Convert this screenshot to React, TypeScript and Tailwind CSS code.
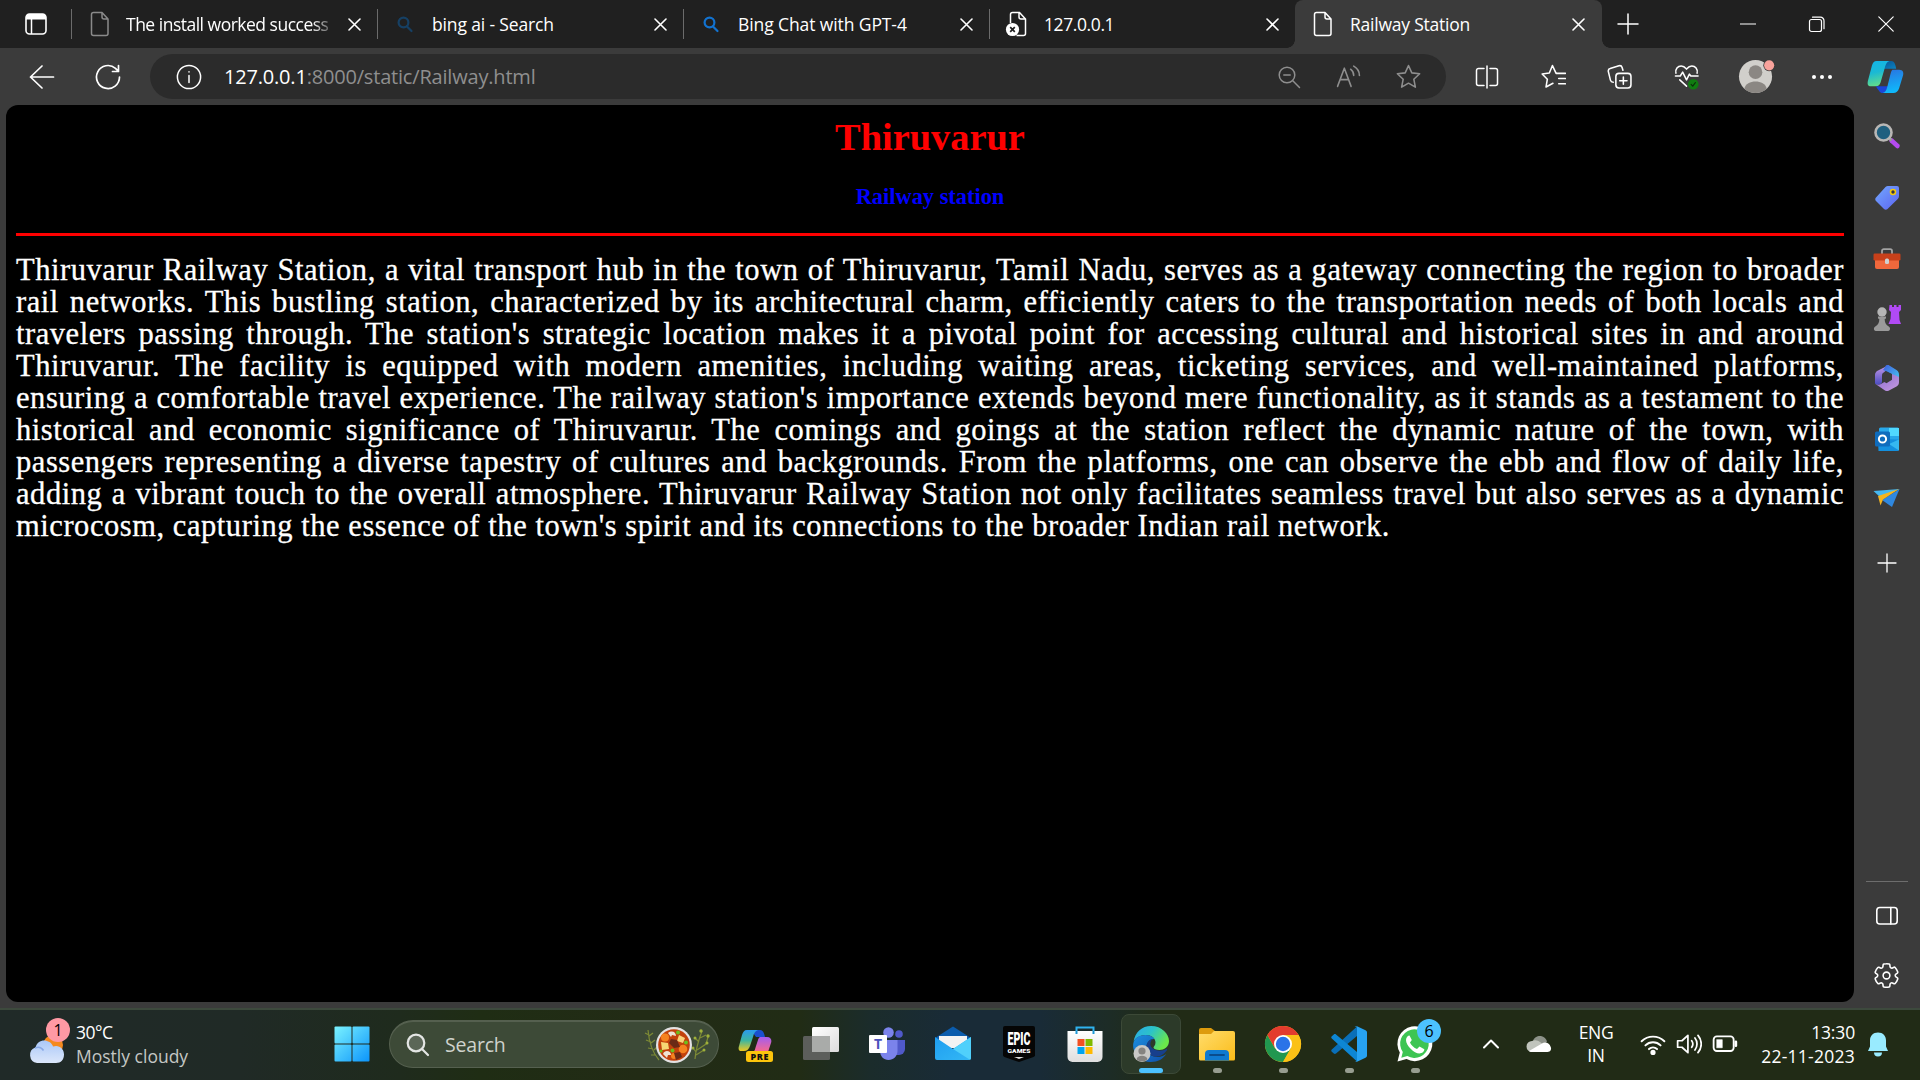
import React from 'react';

type Kids = { children?: React.ReactNode };
type IconProps = Kids & { s?: number; w?: number; h?: number; vb?: string; sw?: number; cls?: string };

// Outline icon: strokes follow the current text colour.
function Line({ children, s = 24, sw = 1.5, vb = '0 0 24 24', cls = '' }: IconProps) {
  return (
    <svg width={s} height={s} viewBox={vb} fill="none" stroke="currentColor" strokeWidth={sw} strokeLinecap="round" strokeLinejoin="round" className={'shrink-0 ' + cls}>
      {children}
    </svg>
  );
}

// Multi-colour icon.
function Art({ children, w = 36, h = 36, vb = '0 0 36 36', cls = '' }: IconProps) {
  return (
    <svg width={w} height={h} viewBox={vb} className={'shrink-0 overflow-visible ' + cls}>
      {children}
    </svg>
  );
}

function Grad({ id, from, to, x2 = 1, y2 = 1, mid }: { id: string; from: string; to: string; x2?: number; y2?: number; mid?: string }) {
  return (
    <linearGradient id={id} x1="0" y1="0" x2={x2} y2={y2}>
      <stop offset="0" stopColor={from} />
      {mid ? <stop offset="0.5" stopColor={mid} /> : null}
      <stop offset="1" stopColor={to} />
    </linearGradient>
  );
}

function CloseIcon() {
  return (
    <Line s={13} vb="0 0 13 13" sw={1.6} cls="text-white">
      <path d="M1 1l11 11M12 1L1 12" />
    </Line>
  );
}

function PageIcon() {
  return (
    <Line s={26} vb="0 0 26 26" sw={1.5}>
      <path d="M6.5 1.5h8.5l6 6.5v14.500a2 2 0 0 1-2 2H6.500a2 2 0 0 1-2-2v-19a2 2 0 0 1 2-2zM15 1.500v4.500a2 2 0 0 0 2 2h4" />
    </Line>
  );
}

function BingGlass() {
  return (
    <Line s={18} vb="0 0 18 18" sw={2.2} cls="mr-0.5">
      <circle cx="7.500" cy="7.500" r="4.900" />
      <path d="M11 11.500l4.500 4.500" />
    </Line>
  );
}

function FailedPage() {
  return (
    <svg width="26" height="26" viewBox="0 0 26 26" className="mr-1.5 shrink-0">
      <path d="M8.500 12V3.500a2 2 0 0 1 2-2h7l6 6.500v14.500a2 2 0 0 1-2 2h-7M17 1.500v4.500a2 2 0 0 0 2 2h4" fill="none" stroke="#fff" strokeWidth="1.500" />
      <circle cx="10.500" cy="18.500" r="6.600" fill="#fff" />
      <path d="M8.200 16.200l4.600 4.600m0-4.600l-4.600 4.600" stroke="#202020" strokeWidth="1.700" />
    </svg>
  );
}

function Tab({ icon, title, track }: { icon: React.ReactNode; title: string; track: string }) {
  return (
    <div className="flex h-12 w-[306px] items-center">
      <span className="h-[30px] w-px bg-[#6b6b6b]" />
      <span className="ml-3.5 flex w-7 justify-center">{icon}</span>
      <span className={'ml-3 w-[214px] whitespace-nowrap text-[17.500px] leading-6 ' + track}>{title}</span>
      <span className="ml-2 flex">
        <CloseIcon />
      </span>
    </div>
  );
}

function TabStrip() {
  return (
    <div className="flex h-12 items-center bg-[#202020] text-white">
      <div className="flex w-[71px] justify-center">
        <svg width="24" height="24" viewBox="0 0 24 24">
          <rect x="2" y="2" width="20" height="20" rx="3.500" fill="none" stroke="#fff" strokeWidth="1.600" />
          <path d="M2 7.500V5.500A3.500 3.500 0 0 1 5.500 2h13A3.500 3.500 0 0 1 22 5.500v2z" fill="#fff" />
          <path d="M7.500 7v15" stroke="#fff" strokeWidth="1.500" />
        </svg>
      </div>
      <Tab
        icon={<span className="text-[#8a8a8a]"><PageIcon /></span>}
        title="The install worked success"
        track="tracking-[-0.500px] [mask-image:linear-gradient(to_right,black_186px,transparent_210px)]"
      />
      <Tab icon={<span className="text-[#164064]"><BingGlass /></span>} title="bing ai - Search" track="tracking-[-0.150px]" />
      <Tab icon={<span className="text-[#1272cf]"><BingGlass /></span>} title="Bing Chat with GPT-4" track="tracking-[-0.100px]" />
      <Tab icon={<FailedPage />} title="127.0.0.1" track="tracking-[-0.400px]" />
      <div className="relative flex h-12 w-[307px] items-center rounded-t-lg bg-[#3b3b3b]">
        <span className="absolute -left-2 bottom-0 h-2 w-2 bg-[radial-gradient(circle_at_0_0,#202020_7.500px,#3b3b3b_8px)]" />
        <span className="absolute -right-2 bottom-0 h-2 w-2 bg-[radial-gradient(circle_at_100%_0,#202020_7.500px,#3b3b3b_8px)]" />
        <span className="ml-[14px] flex w-7 justify-center"><PageIcon /></span>
        <span className="ml-[13px] w-[208px] whitespace-nowrap text-[17.500px] leading-6 tracking-[-0.220px]">Railway Station</span>
        <span className="ml-[14px] flex"><CloseIcon /></span>
      </div>
      <span className="ml-[15px] flex">
        <Line s={22} vb="0 0 22 22" sw={1.5}><path d="M11 1v20M1 11h20" /></Line>
      </span>
      <div className="ml-auto flex items-center">
        <span className="flex w-[69px] justify-center">
          <Line s={16} vb="0 0 16 16" sw={1.200}><path d="M0.500 8h15" /></Line>
        </span>
        <span className="flex w-[69px] justify-center">
          <Line s={17} vb="0 0 17 17" sw={1.200}>
            <rect x="1.500" y="3.500" width="12" height="12" rx="2" />
            <path d="M4.500 1.200h8a3.500 3.500 0 0 1 3.500 3.500v8" />
          </Line>
        </span>
        <span className="flex w-[69px] justify-center">
          <Line s={16} vb="0 0 16 16" sw={1.200}><path d="M0.800 0.800l14.400 14.400M15.200 0.800L0.800 15.200" /></Line>
        </span>
      </div>
    </div>
  );
}

function CopilotSwirl() {
  return (
    <Art w={37} h={35} vb="0 0 38 36">
      <defs>
        <Grad id="cpA" from="#12b4e8" mid="#1bb9d4" to="#5ddb8e" x2={0.2} />
        <Grad id="cpB" from="#2a72e0" to="#0fb8fb" x2={0.2} />
        <Grad id="cpC" from="#0a4f8e" to="#0a84c4" />
      </defs>
      <path d="M14 2h11c3 0 4 3 5 8H17z" fill="url(#cpC)" />
      <path d="M10 2h13c-3 1-4 4-5 8l-4 14c-1 3-2 4-5 4H4c-3 0-4-2-3-6L5 7c1-3 2-5 5-5z" fill="url(#cpA)" />
      <path d="M9 28h13l-4 7h-2c-3 0-4-3-7-7z" fill="#1b46d8" />
      <path d="M26 11h7c4 0 5 3 4 6l-4 13c-1 3-3 5-6 5H16c3-1 4-3 5-7l3-12c.5-2 1-4 2-5z" fill="url(#cpB)" />
    </Art>
  );
}

function Toolbar() {
  return (
    <div className="flex h-[57px] items-center bg-[#3b3b3b] text-white">
      <span className="ml-[29px] flex">
        <Line s={26} vb="0 0 26 26" sw={1.700}><path d="M13 2L1.500 13 13 24M1.500 13h23" /></Line>
      </span>
      <span className="ml-10 flex">
        <Line s={26} vb="0 0 26 26" sw={1.700}><path d="M24.500 13a11.500 11.500 0 1 1-4-8.700l2.500 2.500M23.500 1.500v6h-6" /></Line>
      </span>
      <div className="ml-[29px] flex h-[45px] w-[1296px] items-center rounded-full bg-[#2b2b2b]">
        <span className="ml-[26px] flex">
          <Line s={26} vb="0 0 26 26" sw={1.500}><circle cx="13" cy="13" r="11.600" /><path d="M13 11.500v7M13 7.800v.3" /></Line>
        </span>
        <span className="ml-[22px] whitespace-nowrap text-[20px] tracking-[-0.190px] text-[#8f8f8f]">
          <span className="text-white">127.0.0.1</span>:8000/static/Railway.html
        </span>
        <div className="ml-auto mr-[25px] flex items-center gap-[35px] text-[#8e8e8e]">
          <Line><circle cx="10" cy="10" r="7.800" /><path d="M15.800 15.800l6.700 6.700M6.800 10h6.400" /></Line>
          <Line s={25}>
            <path d="M1.500 21.500L8 4l6.500 17.500M4 15h8M14 5c2 1.500 3 3.500 3 6M17 2c3.500 2 5.500 5 5.500 9" />
          </Line>
          <Line s={25}><path d="M12 1.500l3.200 7 7.500.900-5.600 5.200 1.500 7.600-6.600-3.800-6.600 3.800 1.500-7.600L1.300 9.400l7.500-.9z" /></Line>
        </div>
      </div>
      <div className="ml-[29px] flex items-center gap-[41.500px]">
        <Line><path d="M12 1v22M9 3.500H3.500a2 2 0 0 0-2 2v13a2 2 0 0 0 2 2H9M15 3.500h5.500a2 2 0 0 1 2 2v13a2 2 0 0 1-2 2H15" /></Line>
        <Line s={25}><path d="M15 9h8.500M17 14h6.500M17 19h6.500M14.500 9L11 1.500 8 8.700l-6.900.900 5 5-1.300 7.500 6.700-3.600" /></Line>
        <Line s={25}>
          <rect x="8.500" y="9" width="14.500" height="14" rx="3" />
          <path d="M15.700 12.500v7M12.200 16h7M6 17.500c-1.500 0-2.300-.5-2.700-2L1.300 7.300C1 5.700 1.500 4.800 3 4.400l8.500-2.700c1.500-.4 2.500.1 3 1.600L15.300 6" />
        </Line>
        <svg width="26" height="27" viewBox="0 0 27 27" fill="none" className="shrink-0">
          <path d="M2 10C1 5.500 4 2.500 7.500 2.500c2.500 0 4 1.500 5.500 3.300 1.500-1.800 3-3.300 5.500-3.300C22 2.500 25 5.500 24 10M1.500 13h5l2.500-4 4 8 3-6 1.500 2H25M6 17l7 6.500" stroke="#fff" strokeWidth="1.600" strokeLinecap="round" strokeLinejoin="round" />
          <circle cx="20" cy="21.500" r="5.500" fill="#107c10" />
          <path d="M17.500 21.500l2 2 3-4" stroke="#0b2b0b" strokeWidth="1.200" />
        </svg>
      </div>
      <Art w={37} h={38} vb="0 0 38 38" cls="ml-[38px]">
        <circle cx="18" cy="18.500" r="17" fill="#d1cfcb" />
        <circle cx="18" cy="14" r="7" fill="#8b8783" />
        <path d="M6.500 31c2-10 21-10 23 0A17 17 0 0 1 6.500 31z" fill="#8b8783" />
        <circle cx="32" cy="7" r="6" fill="#3b3b3b" />
        <circle cx="32" cy="7" r="5.200" fill="#f8a29b" />
      </Art>
      <span className="ml-[37px] flex w-5 justify-between">
        <i className="h-1 w-1 rounded-full bg-white" />
        <i className="h-1 w-1 rounded-full bg-white" />
        <i className="h-1 w-1 rounded-full bg-white" />
      </span>
      <span className="ml-[35px] flex"><CopilotSwirl /></span>
    </div>
  );
}

const lines = [
  'Thiruvarur Railway Station, a vital transport hub in the town of Thiruvarur, Tamil Nadu, serves as a gateway connecting the region to broader',
  'rail networks. This bustling station, characterized by its architectural charm, efficiently caters to the transportation needs of both locals and',
  "travelers passing through. The station's strategic location makes it a pivotal point for accessing cultural and historical sites in and around",
  'Thiruvarur. The facility is equipped with modern amenities, including waiting areas, ticketing services, and well-maintained platforms,',
  "ensuring a comfortable travel experience. The railway station's importance extends beyond mere functionality, as it stands as a testament to the",
  'historical and economic significance of Thiruvarur. The comings and goings at the station reflect the dynamic nature of the town, with',
  'passengers representing a diverse tapestry of cultures and backgrounds. From the platforms, one can observe the ebb and flow of daily life,',
  'adding a vibrant touch to the overall atmosphere. Thiruvarur Railway Station not only facilitates seamless travel but also serves as a dynamic',
];

function Page() {
  return (
    <main className="ml-1.5 h-[897px] w-[1848px] rounded-xl bg-black pl-[10px] pr-[10px] pt-2.5 font-['Liberation_Serif',serif]">
      <h1 className="text-center text-[38.400px] font-bold leading-[44px] text-[#ff0000]">Thiruvarur</h1>
      <h3 className="mt-[25px] text-center text-[22.400px] font-bold leading-[26px] text-[#0000ff]">Railway station</h3>
      <hr className="mt-[23px] h-[3px] border-0 bg-[#ff0000]" />
      <div className="mt-[18px] text-[30.500px] leading-8 tracking-[0.550px] text-white [-webkit-text-stroke:0.300px_white]">
        {lines.map((line) => (
          <p key={line} className="whitespace-nowrap [text-align-last:justify]">{line}</p>
        ))}
        <p className="w-[1374px] whitespace-nowrap [text-align-last:justify]">
          microcosm, capturing the essence of the town's spirit and its connections to the broader Indian rail network.
        </p>
      </div>
    </main>
  );
}

function SideCell({ children, cls }: Kids & { cls: string }) {
  return <div className={'flex w-full items-center justify-center ' + cls}>{children}</div>;
}

function Sidebar() {
  return (
    <aside className="flex h-[903px] w-[65px] flex-col items-center text-white">
      <SideCell cls="h-[62px]">
        <Art w={26} h={26} vb="0 0 26 26">
          <path d="M17.500 17.500l6 5.500" stroke="#b44bf0" strokeWidth="4.500" strokeLinecap="round" />
          <path d="M14 14l3.500 3.500" stroke="#999" strokeWidth="3" />
          <circle cx="9.500" cy="9.500" r="8" fill="#20607f" stroke="#b9b7b5" strokeWidth="2.600" />
        </Art>
      </SideCell>
      <SideCell cls="h-[62px]">
        <Art w={26} h={26} vb="0 0 26 26">
          <defs><Grad id="tag" from="#72a8ff" to="#5c63f0" /></defs>
          <path d="M14 1h9a2 2 0 0 1 2 2v8c0 1-.3 2-1 2.700L13.500 24c-1 1-2.500 1-3.500 0L2 16c-1-1-1-2.500 0-3.500L11.500 2C12.200 1.300 13 1 14 1z" fill="url(#tag)" />
          <circle cx="19" cy="7" r="2.500" fill="#334" stroke="#f2c811" strokeWidth="1.600" />
        </Art>
      </SideCell>
      <SideCell cls="h-[60px]">
        <Art w={28} h={22} vb="0 0 28 22">
          <path d="M9 6V3a1.800 1.800 0 0 1 1.800-1.800h6.400A1.800 1.800 0 0 1 19 3v3" fill="none" stroke="#a3a3a3" strokeWidth="1.800" />
          <rect x="2" y="8" width="24" height="13" rx="2" fill="#f0683c" />
          <rect x="0.500" y="5.500" width="27" height="7" rx="1.200" fill="#c8401a" />
          <rect x="12" y="10.500" width="4" height="5.500" rx="1.500" fill="#d0d0d0" />
        </Art>
      </SideCell>
      <SideCell cls="h-[58px]">
        <Art w={28} h={28} vb="0 0 28 28">
          <path d="M16.500 1h2.500v2h2V1h2.500v2h2V1H28v5l-2 2 .5 8 1.500 4H15.500l2-5 .5-7-2-2z" fill="#b14af5" />
          <circle cx="9" cy="8" r="4.700" fill="#b5b5b5" />
          <path d="M5 12.500h8v2l-1.300.5c0 3 .8 5.500 4 7.500 1.800 1 2 4-.5 4.500H2.800c-2.500-.5-2.300-3.500-.5-4.500 3.200-2 4-4.500 4-7.500L5 14.500z" fill="#9a9a9a" />
        </Art>
      </SideCell>
      <SideCell cls="h-[62px]">
        <Art w={26} h={28} vb="0 0 26 28">
          <defs>
            <Grad id="mA" from="#c99be8" to="#4a4cc0" x2={0} />
            <Grad id="mB" from="#3f5fe0" to="#47c9f0" />
            <Grad id="mC" from="#8a6ad0" to="#c79be0" />
          </defs>
          <path d="M15 1L4 6.500C2 7.500 1 9 1 11v8c0 1.500 2 2 4 1.500 2-.5 3-1.500 3-3V12c0-2 1-3 2.500-4z" fill="url(#mA)" />
          <path d="M12 1.500c1-.6 2.300-.5 3.300 0l7.200 4.500c2 1.200 2.500 3 2.500 5v6l-7-4V10L9 6z" fill="url(#mB)" />
          <path d="M25 13v5c0 2-.5 3.200-2.500 4.500L15 26.500c-1.300.7-2.700.7-4 0L1.500 20c2 1 4 .8 5.500 0l11-6.500V10z" fill="url(#mC)" />
          <path d="M8.500 9.500l4-2.300 5.500 3v5.500l-5.500 3.500-4-2.300z" fill="#3b3b3b" />
        </Art>
      </SideCell>
      <SideCell cls="h-[59px]">
        <Art w={24} h={24} vb="0 0 24 24">
          <rect x="4" y="0.500" width="20" height="17" rx="1.500" fill="#28a8ea" />
          <path d="M14 1h10v8H14z" fill="#50d9ff" />
          <path d="M3 12l21 .5V22.500a1.500 1.500 0 0 1-1.500 1.500H3.500z" fill="#1490df" />
          <path d="M24 12.500v11L14 17z" fill="#35b8f1" />
          <rect x="0" y="4.500" width="15" height="15" rx="1.500" fill="#0f6cbd" />
          <circle cx="7.500" cy="12" r="3.600" fill="none" stroke="#fff" strokeWidth="2" />
        </Art>
      </SideCell>
      <SideCell cls="h-[60px]">
        <Art w={27} h={20} vb="0 0 27 20">
          <path d="M0.500 3L26.500 1 8 10z" fill="#46b8f0" />
          <path d="M26.500 1L19 19 9 12z" fill="#2f88e0" />
          <path d="M26 1L5 8l2.500 9.500L10 11.500z" fill="#f5b51e" />
        </Art>
      </SideCell>
      <SideCell cls="h-[69px]">
        <Line s={20} vb="0 0 20 20" sw={1.300}><path d="M10 1v18M1 10h18" /></Line>
      </SideCell>
      <div className="mt-auto h-px w-[42px] bg-[#6d6d6d]" />
      <SideCell cls="h-[67px]">
        <Line s={24} sw={1.600}><rect x="1.800" y="3.500" width="20.400" height="16.500" rx="3" /><path d="M15.800 3.500V20" /></Line>
      </SideCell>
      <SideCell cls="mb-[6px] h-[53px]">
        <Line s={29} vb="0 0 24 24" sw={1.300}>
          <path d="M12.010 2.250c.740.008 1.470.090 2.180.250.310.070.550.330.580.650l.170 1.530a1.380 1.380 0 0 0 1.920 1.110l1.400-.610c.290-.130.630-.060.850.170a9.800 9.800 0 0 1 2.200 3.800c.090.300-.020.630-.270.810l-1.250.920a1.380 1.380 0 0 0 0 2.220l1.250.920c.250.190.360.520.270.820a9.800 9.800 0 0 1-2.200 3.800.750.750 0 0 1-.850.170l-1.410-.620a1.380 1.380 0 0 0-1.930 1.120l-.170 1.520a.750.750 0 0 1-.570.650 9.500 9.500 0 0 1-4.400 0 .750.750 0 0 1-.570-.650l-.170-1.520a1.380 1.380 0 0 0-1.930-1.110l-1.400.610a.750.750 0 0 1-.850-.170 9.800 9.800 0 0 1-2.200-3.800.750.750 0 0 1 .270-.810l1.240-.920a1.380 1.380 0 0 0 0-2.220l-1.240-.920a.750.750 0 0 1-.280-.810 9.800 9.800 0 0 1 2.200-3.800.750.750 0 0 1 .850-.170l1.400.620a1.380 1.380 0 0 0 1.930-1.120l.170-1.530a.750.750 0 0 1 .580-.650c.720-.160 1.450-.240 2.200-.250z" />
          <circle cx="12" cy="12" r="2.800" />
        </Line>
      </SideCell>
    </aside>
  );
}

function App66({ children, mark }: Kids & { mark?: 'on' | 'run' }) {
  return (
    <div className="flex h-full w-[66px] items-center justify-center">
      <div
        className={
          mark === 'on'
            ? 'relative flex h-[60px] w-[60px] items-center justify-center rounded-lg border border-[#3c4937] bg-[#2c3a29]'
            : 'relative flex h-[60px] w-[60px] items-center justify-center'
        }
      >
        {children}
        {mark === 'on' ? <span className="absolute bottom-0 h-[5px] w-6 rounded-full bg-[#4cc2ff]" /> : null}
        {mark === 'run' ? <span className="absolute bottom-px h-[5px] w-[9px] rounded-full bg-[#979d90]" /> : null}
      </div>
    </div>
  );
}

function Food() {
  return (
    <Art w={66} h={38} vb="0 0 66 38">
      <g stroke="#7d8a35" strokeWidth="1.200" fill="none">
        <path d="M4 4c1 12 4 22 11 30M5 9l-4-2M5 10l4-3M7 16l-5-2M7 17l4-3M9 23l-5-1M10 24l3-3M12 29l-5 0" />
        <path d="M51 33c1-12 4-20 7-28M52 26l-3-4M53 24l9-6 2-7M55 16l-4-4M56 12l6-3M52 29l8-5" />
      </g>
      <g fill="#9fb03a">
        <circle cx="57" cy="5" r="1.700" /><circle cx="64" cy="10" r="1.700" /><circle cx="51" cy="12" r="1.500" /><circle cx="63" cy="17" r="1.500" /><circle cx="60" cy="24" r="1.500" /><circle cx="49" cy="22" r="1.500" />
      </g>
      <circle cx="30" cy="19" r="18" fill="#e4e2e4" />
      <circle cx="30" cy="19" r="15.800" fill="#c2410c" />
      <circle cx="21" cy="11.500" r="4" fill="#f58220" />
      <circle cx="39" cy="23" r="4.300" fill="#f58220" />
      <circle cx="30" cy="30" r="3" fill="#f58220" />
      <path d="M17 16l7 1 1 6-7 1z" fill="#f7d774" />
      <path d="M35 9l6 3-2 5-6-2z" fill="#f9d27a" />
      <path d="M27 13l6 1 3 7-6 1-5-5z" fill="#6b2a16" />
      <path d="M30 27l6-1 2 5-6 3z" fill="#6b2a16" />
      <path d="M24 7c4-3 8-1 8 3l-4-1-1 2zM19 28c2-5 8-3 8 1l-3 0-1 3z" fill="#efe3d4" />
      <circle cx="34" cy="6.500" r="2" fill="#6cbf1d" /><circle cx="42" cy="16.500" r="2" fill="#6cbf1d" /><circle cx="28.500" cy="24.500" r="2" fill="#6cbf1d" /><circle cx="17" cy="25" r="1.600" fill="#6cbf1d" />
    </Art>
  );
}

function Taskbar() {
  return (
    <footer className="flex h-[72px] items-center border-t-2 border-[#3d4a3d] bg-[linear-gradient(to_right,#202a28_0px,#202a26_240px,#1f2b1d_400px,#1f2d14_480px,#222b15_640px,#212c15_800px,#1b2c2b_870px,#192b37_950px,#192b37_1040px,#1d2c26_1110px,#212b16_1160px,#212b16_100%)] pb-0.5 text-white">
      <div className="relative ml-7 h-[46px] w-[42px]">
        <Art w={38} h={46} vb="0 0 38 46">
          <defs><Grad id="cl" from="#aac8f8" to="#dce7fb" x2={0} /></defs>
          <circle cx="25" cy="24" r="10" fill="#f58a1f" />
          <path d="M9 42a8 8 0 0 1-1.500-15.500C9 20 16 17.500 21.500 21c2 1.300 3 3 3.500 4.500 6-2 11 2 11 8 0 5-3 8.500-8 8.500z" fill="url(#cl)" />
          <path d="M7 27c4-1.500 7 0 8.500 2.500" stroke="#88a9e6" strokeWidth="1.500" fill="none" />
        </Art>
        <span className="absolute left-[18px] top-[-3px] flex h-6 w-6 items-center justify-center rounded-full bg-[#ff99a4] text-[16px] leading-none text-black">1</span>
      </div>
      <div className="ml-1.5 w-[250px] whitespace-nowrap text-[17.500px] leading-6">
        <div className="tracking-[-0.500px]">30°C</div>
        <div className="text-[#c4c7c4]">Mostly cloudy</div>
      </div>
      <Art w={36} h={36} cls="ml-[8px]">
        <defs><linearGradient id="win" gradientUnits="userSpaceOnUse" x1="0" y1="0" x2="36" y2="36"><stop stopColor="#7cf4ff" /><stop offset="1" stopColor="#0a93fb" /></linearGradient></defs>
        <g fill="url(#win)">
          <rect x="0.500" y="0.500" width="17" height="17" rx="1" /><rect x="18.500" y="0.500" width="17" height="17" rx="1" />
          <rect x="0.500" y="18.500" width="17" height="17" rx="1" /><rect x="18.500" y="18.500" width="17" height="17" rx="1" />
        </g>
      </Art>
      <div className="ml-[19px] flex h-12 w-[330px] items-center rounded-full border border-t-2 border-[#55604f] bg-[#3d4a37]">
        <Line s={24} sw={2.200} cls="ml-4 text-[#e4e6e4]"><circle cx="10" cy="10" r="8.300" fill="#5b6657" /><path d="M16 16l6 6" /></Line>
        <span className="ml-[15px] text-[19.500px] tracking-[-0.200px] text-[#cfd3cd]">Search</span>
        <span className="ml-auto mr-[8px] flex"><Food /></span>
      </div>
      <div className="ml-[3px] flex h-full">
        <App66>
          <Art>
            <defs>
              <Grad id="pA" from="#2a9af0" mid="#3db6a0" to="#f0c81e" x2={0} />
              <Grad id="pB" from="#a35cf0" to="#fa6a8a" x2={0} />
            </defs>
            <g transform="translate(1 0)">
              <path d="M9 4h13c3 0 4 3 5 7h-9L13 4z" fill="#1a4fd0" />
              <path d="M9 4h11c-3 1-4 3-5 7l-3 9c-1 3-3 5-6 5H3c-2 0-3-2-2-5L4 9c1-3 2-5 5-5z" fill="url(#pA)" />
              <path d="M22 11h7c4 0 5 3 4 6l-3 9H15c2-1 2-3 3-6l2-6c.4-1.500 1-2.400 2-3z" fill="url(#pB)" />
              <rect x="8" y="25" width="27" height="11" rx="2.500" fill="#fcc50c" />
              <text x="21.800" y="33.500" fontSize="9" fontWeight="800" textAnchor="middle" fill="#111" fontFamily="Open Sans, sans-serif" letterSpacing="0.600">PRE</text>
            </g>
          </Art>
        </App66>
        <App66>
          <Art>
            <defs><Grad id="tv" from="#ffffff" to="#dcdcdc" /></defs>
            <rect x="9" y="1" width="27" height="25" rx="1.500" fill="url(#tv)" />
            <rect x="0" y="10" width="27" height="24" rx="1.500" fill="#5c5e5b" />
            <path d="M9 10h18v16H9z" fill="#a9aba9" />
          </Art>
        </App66>
        <App66>
          <Art>
            <circle cx="30" cy="8" r="3.800" fill="#5059c9" />
            <path d="M25 14h11v9a6 6 0 0 1-6 6h-5z" fill="#5059c9" />
            <circle cx="19.500" cy="6.500" r="5.300" fill="#7b83eb" />
            <path d="M11 14h17.500v11c0 5-4 9-9 9s-8.500-4-8.500-9z" fill="#7b83eb" />
            <rect x="0" y="9" width="18" height="18" rx="1" fill="#fff" />
            <text x="9" y="23" fontSize="14" fontWeight="700" textAnchor="middle" fill="#4b53bc" fontFamily="Open Sans, sans-serif">T</text>
          </Art>
        </App66>
        <App66>
          <Art>
            <defs><Grad id="ml" from="#1f9df0" to="#33b8f5" /></defs>
            <path d="M0 12L18 0.500 36 12v5H0z" fill="#0b5cad" />
            <path d="M4 10h28v12H4z" fill="#f3f3f3" />
            <path d="M0 11l18 12L36 11v21a2 2 0 0 1-2 2H2a2 2 0 0 1-2-2z" fill="url(#ml)" />
            <path d="M36 11v21a2 2 0 0 1-1 1.700L18 23z" fill="#50d0fb" />
          </Art>
        </App66>
        <App66>
          <Art>
            <path d="M4 0h28a2 2 0 0 1 2 2v27c0 1-.5 1.500-1.500 2L18 36 3.500 31c-1-.5-1.500-1-1.500-2V2a2 2 0 0 1 2-2z" fill="#050505" />
            <g fill="#fff" fontFamily="Roboto, sans-serif" fontWeight="900" textAnchor="middle">
              <text x="18" y="18.500" fontSize="19" textLength="23" lengthAdjust="spacingAndGlyphs">EPIC</text>
              <text x="18" y="26.500" fontSize="6.200" textLength="23" lengthAdjust="spacingAndGlyphs">GAMES</text>
            </g>
            <path d="M13 31h10l-5 2z" fill="#ddd" />
          </Art>
        </App66>
        <App66>
          <Art>
            <defs><Grad id="st" from="#ffffff" to="#dedede" x2={0} /></defs>
            <path d="M9.500 7V1.500h17V7" fill="none" stroke="#2fb2ee" strokeWidth="2" />
            <path d="M0.500 5h35v26a5 5 0 0 1-5 5h-25a5 5 0 0 1-5-5z" fill="url(#st)" />
            <path d="M9.500 8V5M26.500 8V5" stroke="#1c97d6" strokeWidth="2" />
            <path d="M10.500 13h7v7h-7z" fill="#f25022" /><path d="M18.500 13h7v7h-7z" fill="#7fba00" />
            <path d="M10.500 21h7v7h-7z" fill="#00a4ef" /><path d="M18.500 21h7v7h-7z" fill="#ffb900" />
          </Art>
        </App66>
        <App66 mark="on">
          <Art>
            <defs>
              <Grad id="eA" from="#2aa8ec" mid="#2cc3c8" to="#6be84a" y2={0.5} />
              <Grad id="eB" from="#1c8ee0" to="#0f4ea8" />
            </defs>
            <path d="M0.500 16C2 6 9 0 18 0c11 0 18 8 18 15 0 6-5 9-9.500 9-3.500 0-6-1-6-2.500 0-1 2-2 2-5C22.500 12 18 9 13 9 7 9 2 12 .5 16z" fill="url(#eA)" />
            <path d="M0.200 18C1 12 6.500 9 12.500 9c4 0 7.500 1.500 9 4-4-.5-8 3-8 8 0 6 5 10 11 10 4 0 7-1.500 8.800-3C30 33 25 36 18 36 8 36-.7 28 .2 18z" fill="url(#eB)" />
            <path d="M13.500 21c0-4 2-7 6-8-3 3-3 8 1 10 4 2.500 9 2 13 0 .5 0 .8.500.4 1.200C31 29 24 32 19.500 30c-4-2-6-5-6-9z" fill="#173f8c" />
            <circle cx="9" cy="27.500" r="8.500" fill="#c9c8c6" /><circle cx="9" cy="25" r="3.600" fill="#858381" />
            <path d="M3.500 33.500c.5-5 10.500-5 11 0a8.500 8.500 0 0 1-11 0z" fill="#858381" />
          </Art>
        </App66>
        <App66 mark="run">
          <Art>
            <defs><Grad id="fo" from="#ffdc6b" to="#fbbc19" /></defs>
            <path d="M0 4a2 2 0 0 1 2-2h10l4 3v6H0z" fill="#dd9b0d" />
            <path d="M0 8h12l3-3h19a2 2 0 0 1 2 2v26a1.500 1.500 0 0 1-1.500 1.500h-33A1.500 1.500 0 0 1 0 33z" fill="url(#fo)" />
            <path d="M6 34.500V28a4 4 0 0 1 4-4h16a4 4 0 0 1 4 4v6.500z" fill="#0f7ad0" />
            <path d="M11 29h14" stroke="#0a4c8c" strokeWidth="1.800" strokeLinecap="round" />
          </Art>
        </App66>
        <App66 mark="run">
          <Art>
            <circle cx="18" cy="18" r="18" fill="#fbc116" />
            <path d="M2.400 9l7.800 13.500L18 18l7.800 4.500L18 36A18 18 0 0 1 2.400 9z" fill="#219750" />
            <path d="M2.400 9A18 18 0 0 1 33.600 9H18l-7.800 13.500z" fill="#e33b2e" />
            <path d="M18 9h15.600A18 18 0 0 1 18 36l7.800-13.500z" fill="#fbc116" />
            <circle cx="18" cy="18" r="9" fill="#fff" /><circle cx="18" cy="18" r="7.200" fill="#2a73e8" />
          </Art>
        </App66>
        <App66 mark="run">
          <Art>
            <path d="M26 0.500v9.500L5 27.500c-.7.600-1.500.6-2.200 0L.8 25.700c-.7-.7-.7-1.700 0-2.300z" fill="#0a6fb8" />
            <path d="M26 35.500V26L5 8.500c-.7-.6-1.500-.6-2.200 0L.8 10.300c-.7.700-.7 1.700 0 2.300z" fill="#0d86d4" />
            <path d="M26 .3l8.500 4c1 .5 1.500 1.200 1.500 2.200v23c0 1-.5 1.700-1.500 2.200l-8.500 4c-1 .5-1.800 0-2.300-.6C25 36 26 35.500 26 34V2c0-1-1-2-2.300-1.200z" fill="#27a3f3" />
          </Art>
        </App66>
        <App66 mark="run">
          <Art>
            <path d="M0.500 35.500l2.300-9A17.500 17.500 0 1 1 9.500 33z" fill="#fff" />
            <path d="M4.300 31.800l1.500-5.900A14.300 14.300 0 1 1 10.300 30z" fill="#3dc553" />
            <path d="M12.500 9.500c-1.500 0-3.500 2-3.500 4.500 0 5.500 8 13.500 13.500 13.500 2.500 0 5-2 4.800-4.200l-4.800-2.800-2.500 2.500c-3-1-6-4-7-6.500l1.800-2.500z" fill="#fff" />
          </Art>
          <span className="absolute left-8 top-[5px] flex h-6 w-6 items-center justify-center rounded-full bg-[#4cc2ff] text-[16px] leading-none text-black">6</span>
        </App66>
      </div>
      <Line s={18} vb="0 0 18 18" sw={2} cls="ml-[34px]"><path d="M2 12.500l7-7 7 7" /></Line>
      <Art w={26} h={18} vb="0 0 26 18" cls="ml-[26px]">
        <path d="M7 6c1-4 5-5.500 8-5s5.500 3 6 5.500L13 14z" fill="#8d9289" />
        <path d="M6 17a5.500 5.500 0 0 1 0-11c3-1.500 6-.5 8 1l5 4-5 6z" fill="#c0c4bc" />
        <path d="M3 16l13-7.500c3-2.500 8-.5 8.500 3 1.500 2.500 0 5.500-3 5.500H6c-1.500 0-2.500-.5-3-1z" fill="#fff" />
      </Art>
      <div className="ml-[22px] w-[44px] text-center text-[17.500px] leading-[23px] tracking-[-0.300px]">
        <div>ENG</div>
        <div>IN</div>
      </div>
      <Line s={26} sw={1.800} cls="ml-[22px]"><path d="M1.500 9.500a15 15 0 0 1 21 0M5 13.300a10 10 0 0 1 14 0M8.300 16.700a5.500 5.500 0 0 1 7.400 0" /><circle cx="12" cy="19.800" r="1.500" fill="currentColor" /></Line>
      <Line s={26} sw={1.600} cls="ml-2.5"><path d="M1.500 9h4l5.500-5v16l-5.500-5h-4zM14.500 9c1.300 1.800 1.300 4.200 0 6M17.500 6.500c2.500 3.200 2.500 7.800 0 11M20.300 4c4 4.600 4 11.400 0 16" /></Line>
      <Line s={26} sw={1.700} cls="ml-2.5"><rect x="1.500" y="5" width="18.500" height="13.500" rx="3" /><rect x="4.500" y="8" width="5" height="7.500" fill="currentColor" strokeWidth="0.500" /><path d="M22 10v3.500" strokeWidth="2.500" /></Line>
      <div className="ml-auto whitespace-nowrap text-right text-[17.500px] leading-6">
        <div className="tracking-[-0.150px]">13:30</div>
        <div className="tracking-[0.250px]">22-11-2023</div>
      </div>
      <Art w={22} h={24} vb="0 0 22 24" cls="ml-3 mr-[31px]">
        <path d="M11 0.500c5 0 8 3.500 8 8v6l2 4.500H1l2-4.500v-6c0-4.500 3-8 8-8zM7 20.500h8a4 4 0 0 1-8 0z" fill="#99ebff" />
      </Art>
    </footer>
  );
}

export default function App() {
  return (
    <div className="flex h-[1080px] w-[1920px] flex-col overflow-hidden bg-[#3b3b3b] font-['Open_Sans','Noto_Sans',sans-serif]">
      <TabStrip />
      <Toolbar />
      <div className="flex h-[903px]">
        <Page />
        <Sidebar />
      </div>
      <Taskbar />
    </div>
  );
}
